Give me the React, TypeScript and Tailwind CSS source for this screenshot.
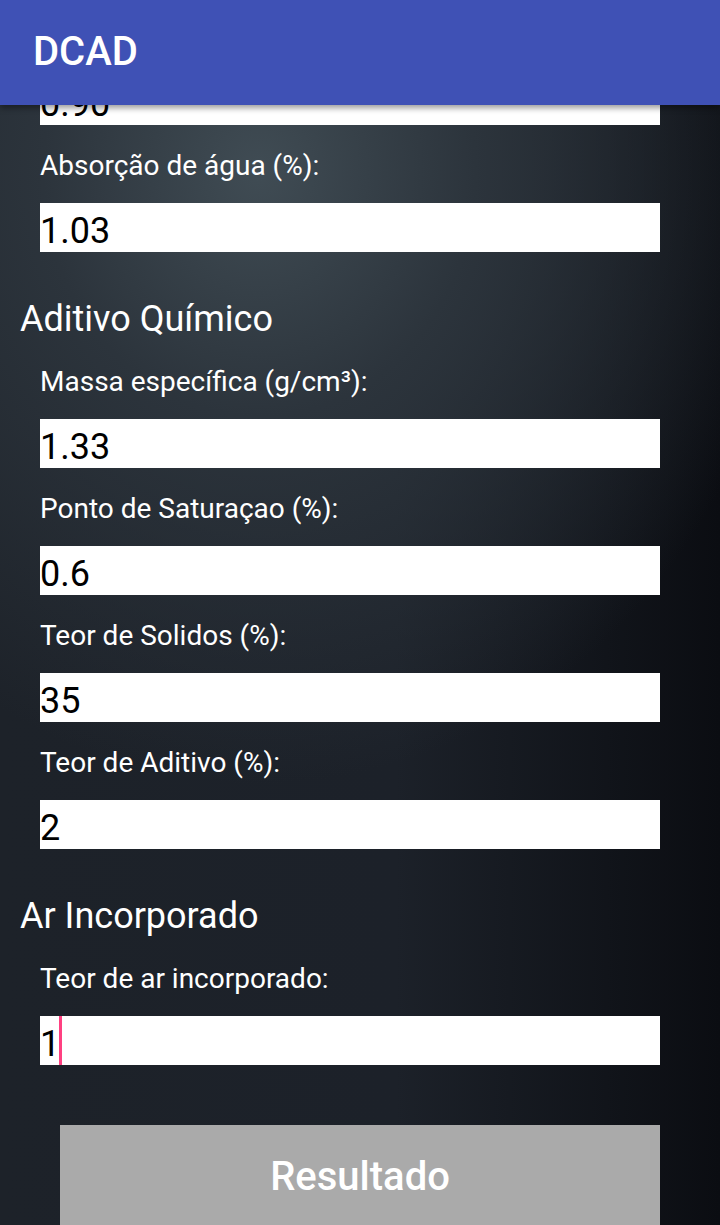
import React from "react";

interface FieldProps {
  value: string;
  focused?: boolean;
  className?: string;
}

function Field({ value, focused, className }: FieldProps) {
  return (
    <div
      className={
        "relative ml-[40px] w-[620px] h-[49px] shrink-0 bg-white text-black text-[36px] leading-[42px] pt-[7px] overflow-hidden whitespace-nowrap " +
        (className || "")
      }
    >
      {value}
      {focused && (
        <span className="absolute left-[19px] top-0 bottom-0 w-[3px] bg-[#ff4081]" />
      )}
    </div>
  );
}

function Label({ children }: { children: React.ReactNode }) {
  return (
    <div className="h-[78px] shrink-0 pt-[25px] pl-[40px] text-[28px] leading-[32px] text-white whitespace-nowrap">
      {children}
    </div>
  );
}

function SectionTitle({ children }: { children: React.ReactNode }) {
  return (
    <div className="h-[89px] shrink-0 pt-[47px] pl-[20px] text-[36px] leading-[40px] text-white whitespace-nowrap">
      {children}
    </div>
  );
}

export default function App() {
  return (
    <div className="w-[720px] h-[1225px] overflow-hidden flex flex-col font-['Roboto','Liberation_Sans',sans-serif] [background-image:radial-gradient(ellipse_75%_50%_at_36%_14%,#404c54_0%,#2c343c_40%,rgba(29,34,42,0)_100%),linear-gradient(90deg,#1d2229_0%,#1c2129_55%,#0b0d12_100%)]">
      <header className="relative z-10 h-[105px] shrink-0 bg-[#3f51b5] shadow-[0_3px_6px_rgba(0,0,0,0.4)]">
        <h1 className="pl-[33px] pt-[28px] text-[40px] leading-[47px] font-medium text-white">
          DCAD
        </h1>
      </header>

      <main className="flex flex-col">
        <Field value="0.90" className="-mt-[29px]" />
        <Label>Absorção de água (%):</Label>
        <Field value="1.03" />

        <SectionTitle>Aditivo Químico</SectionTitle>
        <Label>Massa específica (g/cm³):</Label>
        <Field value="1.33" />
        <Label>Ponto de Saturaçao (%):</Label>
        <Field value="0.6" />
        <Label>Teor de Solidos (%):</Label>
        <Field value="35" />
        <Label>Teor de Aditivo (%):</Label>
        <Field value="2" />

        <SectionTitle>Ar Incorporado</SectionTitle>
        <Label>Teor de ar incorporado:</Label>
        <Field value="1" focused />

        <div className="pt-[60px] pl-[60px]">
          <button
            type="button"
            className="w-[600px] h-[104px] bg-[#aaaaaa] text-white text-[40px] font-medium"
          >
            Resultado
          </button>
        </div>
      </main>
    </div>
  );
}
